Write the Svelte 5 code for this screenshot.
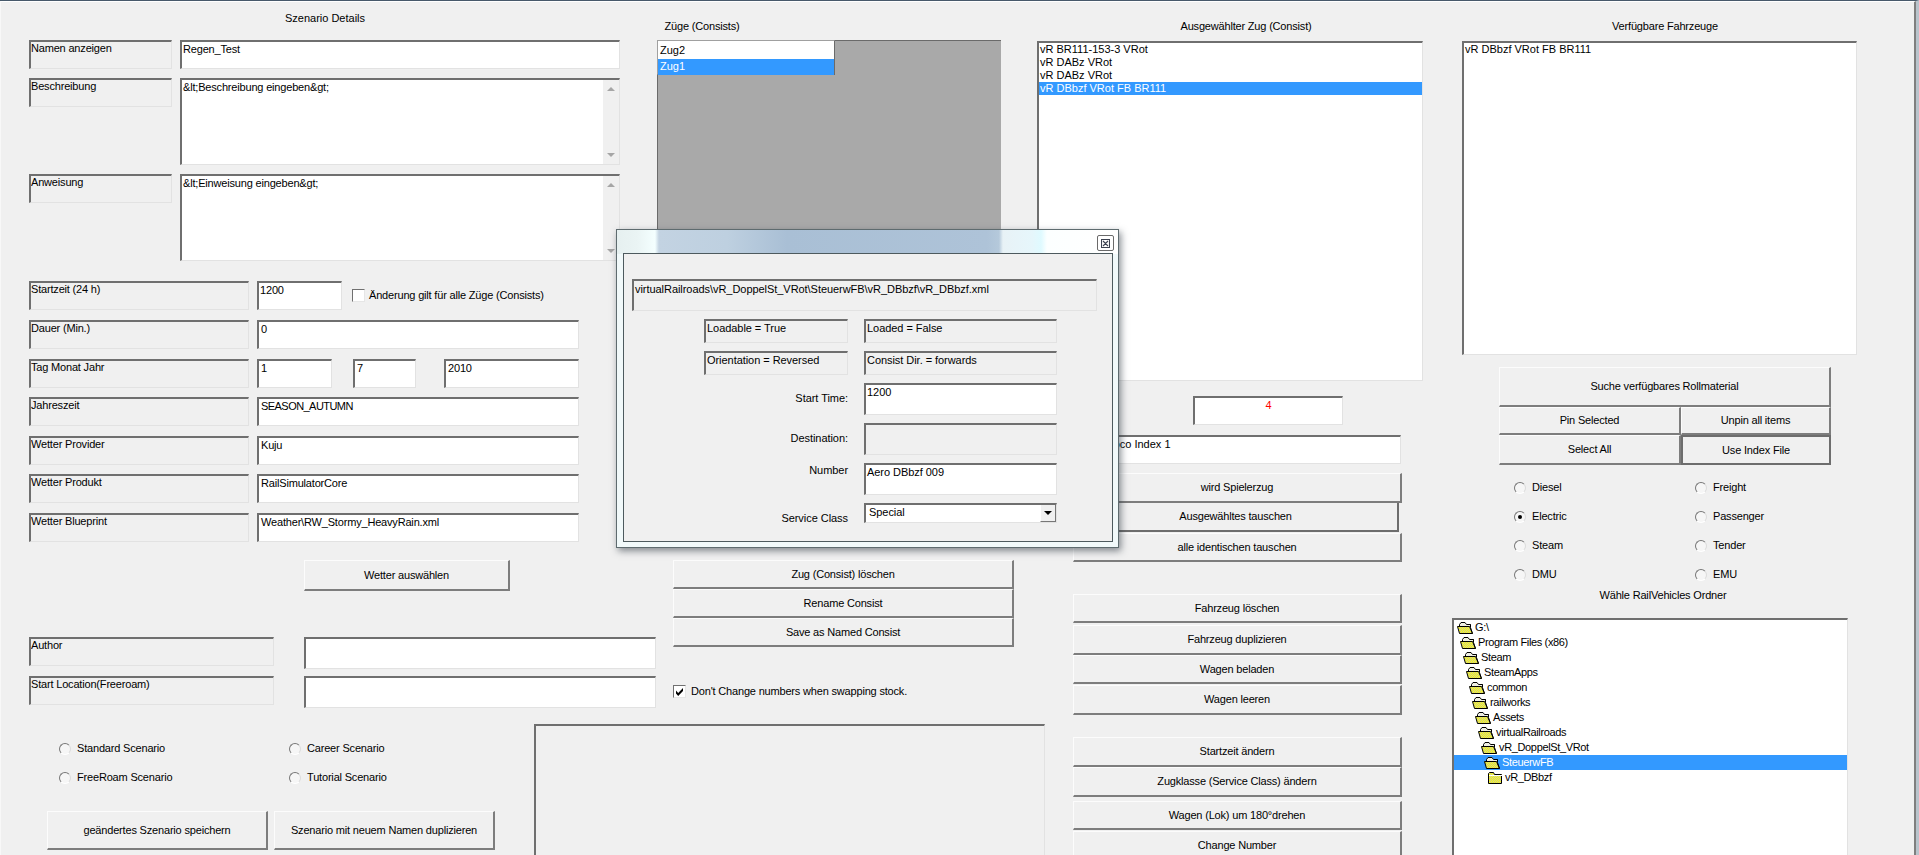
<script>
  const rows = [
    { label: 'Jahreszeit', value: 'SEASON_AUTUMN', cls: 'm9', tight: true },
    { label: 'Wetter Provider', value: 'Kuju', cls: 'm10', tight: false },
    { label: 'Wetter Produkt', value: 'RailSimulatorCore', cls: 'm9', tight: false },
    { label: 'Wetter Blueprint', value: 'Weather\\RW_Stormy_HeavyRain.xml', cls: 'm10', tight: false }
  ];
  const consist = ['vR BR111-153-3 VRot', 'vR DABz VRot', 'vR DABz VRot', 'vR DBbzf VRot FB BR111'];
  const tree = ['G:\\', 'Program Files (x86)', 'Steam', 'SteamApps', 'common', 'railworks', 'Assets', 'virtualRailroads', 'vR_DoppelSt_VRot', 'SteuerwFB', 'vR_DBbzf'];
  const stock = [['Diesel', 'Freight'], ['Electric', 'Passenger'], ['Steam', 'Tender'], ['DMU', 'EMU']];
</script>

<svg class="defs" aria-hidden="true">
  <defs>
    <pattern id="dither" width="2" height="2" patternUnits="userSpaceOnUse">
      <rect width="2" height="2" fill="#ffff00" />
      <rect width="1" height="1" fill="#c8c8a8" />
      <rect x="1" y="1" width="1" height="1" fill="#c8c8a8" />
    </pattern>
  </defs>
</svg>

<div class="chrome">
  <div class="form">
    <div class="leftwrap">
      <div class="toprow">
        <section class="colA">
          <div class="title scen">Szenario Details</div>
          <div class="row r1 first">
            <div class="sunken lab">Namen anzeigen</div>
            <div class="sunken white val">Regen_Test</div>
          </div>
          <div class="row r1 tall m9">
            <div class="sunken lab">Beschreibung</div>
            <div class="sunken white val area">
              &amp;lt;Beschreibung eingeben&amp;gt;
              <div class="scroll"><i class="up"></i><i class="down"></i></div>
            </div>
          </div>
          <div class="row r1 tall m9">
            <div class="sunken lab">Anweisung</div>
            <div class="sunken white val area">
              &amp;lt;Einweisung eingeben&amp;gt;
              <div class="scroll"><i class="up"></i><i class="down"></i></div>
            </div>
          </div>
          <div class="row r2 m20">
            <div class="sunken lab">Startzeit (24 h)</div>
            <div class="sunken white time">1200</div>
            <div class="check allc"><span class="box"></span>Änderung gilt für alle Züge (Consists)</div>
          </div>
          <div class="row r2 m10">
            <div class="sunken lab">Dauer (Min.)</div>
            <div class="sunken white val">0</div>
          </div>
          <div class="row r2 m10">
            <div class="sunken lab">Tag Monat Jahr</div>
            <div class="sunken white d1">1</div>
            <div class="sunken white d2">7</div>
            <div class="sunken white d3">2010</div>
          </div>
          {#each rows as r}
            <div class="row r2 {r.cls}">
              <div class="sunken lab">{r.label}</div>
              <div class="sunken white val" class:tight={r.tight}>{r.value}</div>
            </div>
          {/each}
          <button class="btn weather">Wetter auswählen</button>
          <div class="row r3 author">
            <div class="sunken lab">Author</div>
            <div class="sunken white val"></div>
          </div>
          <div class="row r3 start">
            <div class="sunken lab">Start Location(Freeroam)</div>
            <div class="sunken white val"></div>
          </div>
        </section>

        <section class="colB">
          <div class="title zuege">Züge (Consists)</div>
          <div class="graypanel">
            <div class="zuglist">
              <div class="zitem">Zug2</div>
              <div class="zitem sel">Zug1</div>
            </div>
          </div>
          <div class="bstack">
            <button class="btn b29">Zug (Consist) löschen</button>
            <button class="btn b29">Rename Consist</button>
            <button class="btn b29">Save as Named Consist</button>
          </div>
          <div class="check dont">
            <span class="box"><svg viewBox="0 0 11 11" width="11" height="11"><path d="M2 4.6l2.2 2.4L9 2v3L4.2 10 2 7.6z" fill="#000" /></svg></span>Don't Change numbers when swapping stock.
          </div>
        </section>
      </div>

      <div class="bottomrow">
        <div class="scenblock">
          <div class="scengrid">
            <div class="radio"><span class="dot"></span>Standard Scenario</div>
            <div class="radio"><span class="dot"></span>Career Scenario</div>
            <div class="radio"><span class="dot"></span>FreeRoam Scenario</div>
            <div class="radio"><span class="dot"></span>Tutorial Scenario</div>
          </div>
          <div class="savebtns">
            <button class="btn">geändertes Szenario speichern</button>
            <button class="btn">Szenario mit neuem Namen duplizieren</button>
          </div>
        </div>
        <div class="sunken emptypanel"></div>
      </div>
    </div>

    <section class="colC">
      <div class="title sel-title">Ausgewählter Zug (Consist)</div>
      <div class="sunken white list clist">
        {#each consist as c, i}
          <div class="litem" class:sel={i === 3}>{c}</div>
        {/each}
      </div>
      <div class="sunken white idx">4</div>
      <div class="sunken white loco">Lead Loco Index 1</div>
      <div class="bstack cbtns first3">
        <button class="btn b30">wird Spielerzug</button>
        <button class="btn b29 focus">Ausgewähltes tauschen</button>
        <button class="btn b29 low">alle identischen tauschen</button>
      </div>
      <div class="bstack cbtns second">
        <button class="btn b29">Fahrzeug löschen</button>
        <button class="btn b30 low2">Fahrzeug duplizieren</button>
        <button class="btn b29">Wagen beladen</button>
        <button class="btn b30 low">Wagen leeren</button>
      </div>
      <div class="bstack cbtns third">
        <button class="btn b30">Startzeit ändern</button>
        <button class="btn b30">Zugklasse (Service Class) ändern</button>
        <button class="btn b29 low3">Wagen (Lok) um 180°drehen</button>
        <button class="btn b30 low">Change Number</button>
      </div>
    </section>

    <section class="colD">
      <div class="title avail">Verfügbare Fahrzeuge</div>
      <div class="sunken white list dlist"><div class="litem">vR DBbzf VRot FB BR111</div></div>
      <div class="stockbtns">
        <button class="btn search">Suche verfügbares Rollmaterial</button>
        <button class="btn">Pin Selected</button>
        <button class="btn">Unpin all items</button>
        <button class="btn">Select All</button>
        <button class="btn usefile">Use Index File</button>
      </div>
      <div class="stockgrid">
        {#each stock as pair, i}
          {#each pair as s, j}
            <div class="radio"><span class="dot" class:on={i === 1 && j === 0}></span>{s}</div>
          {/each}
        {/each}
      </div>
      <div class="title folders">Wähle RailVehicles Ordner</div>
      <div class="sunken white tree">
        {#each tree as t, i}
          <div class="trow" class:sel={i === 9} style="padding-left:{3 + i * 3}px">
            {#if i < 10}
              <svg class="folder" viewBox="0 0 16 14" width="16" height="14">
                <path d="M2.5 11V3.5L4 1.5h4l1.5 2h4v2.5" fill="#efefe4" stroke="#000" />
                <path d="M.5 5.5h12l3 7H2.5z" fill="url(#dither)" stroke="#000" />
                <path d="M13.5 3.5v3l2 6" fill="none" stroke="#000" />
              </svg>
            {:else}
              <svg class="folder" viewBox="0 0 16 14" width="16" height="14">
                <path d="M1.5 12.5V2.5l1-1h4l1 2h7v9z" fill="url(#dither)" stroke="#000" />
                <path d="M2 4.5h13" stroke="#fff" />
              </svg>
            {/if}
            <span>{t}</span>
          </div>
        {/each}
      </div>
    </section>

    <div class="modal" role="dialog" aria-label="Vehicle details">
      <div class="mtitle">
        <div class="close">
          <svg viewBox="0 0 9 9" width="9" height="9">
            <path d="M.5 .5h8v8h-8z M2 2l5 5 M7 2l-5 5" fill="none" stroke="#3c4250" stroke-width="1.1" />
          </svg>
        </div>
      </div>
      <div class="client">
        <div class="sunken path">virtualRailroads\vR_DoppelSt_VRot\SteuerwFB\vR_DBbzf\vR_DBbzf.xml</div>
        <div class="mgrid">
          <div class="sunken s24">Loadable = True</div>
          <div class="sunken s24">Loaded = False</div>
          <div class="sunken s24">Orientation = Reversed</div>
          <div class="sunken s24">Consist Dir. = forwards</div>
          <div class="rl startl">Start Time:</div>
          <div class="sunken white s32">1200</div>
          <div class="rl destl">Destination:</div>
          <div class="sunken s32"></div>
          <div class="rl numl">Number</div>
          <div class="sunken white s32">Aero DBbzf 009</div>
          <div class="rl svcl">Service Class</div>
          <div class="sunken white combo">Special<span class="carrow"><i></i></span></div>
        </div>
      </div>
    </div>
  </div>
</div>

<style>
  :global(body) { margin: 0; background: #f0f0f0; overflow: hidden; }
  .defs { position: absolute; width: 0; height: 0; }
  .chrome {
    height: 855px; box-sizing: border-box; overflow: hidden;
    border-top: 1px solid #47596b; border-right: 3px solid #b9c4cc;
  }
  .form {
    position: relative; display: flex; height: 854px; box-sizing: border-box; overflow: hidden;
    border-top: 1px solid #fff; border-left: 1px solid #f8f8f8; border-right: 2px solid #7f7f7f;
    background: #f0f0f0; color: #000;
    font: 11px/13px "Liberation Sans", Arial, sans-serif; letter-spacing: -0.18px;
  }
  .leftwrap { flex: none; width: 1008px; margin-left: 28px; }
  .toprow { display: flex; height: 705px; }
  .colA { flex: none; width: 627px; }
  .colB { flex: none; width: 381px; }
  .colC { flex: none; width: 415px; }
  .colD { flex: none; width: 460px; }

  .title { text-align: center; height: 13px; }
  .scen { width: 592px; margin-top: 10px; letter-spacing: 0; }
  .zuege { width: 92px; margin-top: 18px; }
  .sel-title { padding-left: 32px; width: 386px; box-sizing: border-box; margin-top: 18px; }
  .avail { width: 426px; margin-top: 18px; }
  .folders { width: 422px; margin-top: 0; }

  .sunken {
    box-sizing: border-box; padding: 1px 0 0 1px; overflow: hidden; white-space: nowrap;
    border-style: solid; border-width: 2px 1px 1px 2px;
    border-color: #6f6f6f #e2e2e2 #e2e2e2 #6f6f6f; background: #f0f0f0;
  }
  .white { background: #fff; }
  .val { padding-left: 2px; }
  .tight { letter-spacing: -0.55px; }

  .row { display: flex; height: 29px; }
  .row .lab { height: 29px; padding: 0; }
  .first { margin-top: 15px; }
  .m9 { margin-top: 9px; }
  .m10 { margin-top: 10px; }
  .m20 { margin-top: 20px; }
  .r1 .lab { flex: none; width: 143px; margin-right: 8px; }
  .r1 .val { flex: none; width: 440px; padding-left: 1px; }
  .r2 .lab { flex: none; width: 220px; margin-right: 8px; }
  .r2 .val { flex: none; width: 322px; }
  .r3 { height: 32px; }
  .r3 .lab { flex: none; width: 245px; margin-right: 30px; }
  .r3 .val { flex: none; width: 352px; }
  .tall { height: 87px; }
  .area { position: relative; height: 87px; }
  .scroll { position: absolute; top: 0; right: 0; bottom: 0; width: 16px; background: #f0f0f0; }
  .up, .down {
    position: absolute; left: 4px; width: 0; height: 0;
    border-left: 4px solid transparent; border-right: 4px solid transparent;
  }
  .up { top: 7px; border-bottom: 4px solid #a6a6a6; }
  .down { bottom: 7px; border-top: 4px solid #a6a6a6; }
  .time { flex: none; width: 85px; }
  .d1 { flex: none; width: 75px; margin-right: 21px; padding-left: 2px; }
  .d2 { flex: none; width: 63px; margin-right: 28px; padding-left: 2px; }
  .d3 { flex: none; width: 135px; padding-left: 2px; }

  .check { display: flex; align-items: center; }
  .box {
    flex: none; display: block; box-sizing: border-box; width: 13px; height: 13px; margin-right: 4px;
    background: #fff; border-style: solid; border-width: 1px; border-color: #707070 #e6e6e6 #e6e6e6 #707070;
  }
  .box svg { display: block; }
  .allc { margin: 8px 0 0 10px; height: 13px; }
  .dont { margin: 38px 0 0 17px; }
  .dont .box { margin-right: 5px; }

  .btn {
    display: block; box-sizing: border-box; width: 100%; height: 39px; margin: 0; padding: 0;
    font: inherit; letter-spacing: inherit; color: #000; text-align: center; background: #f0f0f0; appearance: none;
    border-style: solid; border-width: 1px 2px 2px 1px;
    border-color: #fcfcfc #7d7d7d #7d7d7d #fcfcfc;
  }
  .weather { width: 206px; height: 31px; margin: 18px 0 0 275px; }
  .author { margin-top: 46px; }
  .start { margin-top: 7px; }

  .graypanel {
    box-sizing: border-box; width: 344px; height: 505px; margin: 7px 0 0 1px;
    background: #a9a9a9; border-top: 1px solid #6a6a6a; border-left: 1px solid #6a6a6a;
  }
  .zuglist {
    box-sizing: border-box; width: 178px; height: 35px; margin: -1px 0 0 -1px; padding-top: 2px;
    background: #fff; border-style: solid; border-width: 1px; border-color: #6a6a6a;
    border-top-color: #a0a0a0; border-left-color: #a0a0a0;
  }
  .zitem { height: 16px; line-height: 15px; padding-left: 2px; letter-spacing: 0; }
  .zitem.sel, .litem.sel { background: #3399ff; color: #fff; }

  .bstack { margin: 15px 0 0 17px; width: 341px; }
  .b29 { height: 29px; }
  .b30 { height: 30px; }

  .bottomrow { display: flex; margin-top: 17px; }
  .scenblock { flex: none; width: 487px; margin-left: 18px; }
  .scengrid { display: grid; grid-template-columns: 230px 1fr; grid-auto-rows: 29px; margin: 10px 0 0 12px; }
  .radio { display: flex; align-items: center; }
  .dot {
    flex: none; display: flex; align-items: center; justify-content: center;
    box-sizing: border-box; width: 12px; height: 12px; margin-right: 6px; border-radius: 50%;
    background: #f6f6f6; border: 1px solid; border-color: #777 #dcdcdc #fff #777;
  }
  .dot.on::after { content: ""; width: 4px; height: 4px; border-radius: 50%; background: #000; }
  .savebtns { display: flex; gap: 6px; margin-top: 19px; }
  .savebtns .btn { width: 221px; }
  .emptypanel { flex: none; width: 511px; height: 200px; }

  .list { padding: 0; letter-spacing: 0; }
  .litem { height: 13px; padding-left: 1px; }
  .clist { width: 386px; height: 340px; margin-top: 8px; }
  .idx { width: 150px; height: 29px; margin: 15px 0 0 156px; text-align: center; color: #f00; padding: 1px 0 0; }
  .loco { width: 328px; height: 29px; margin: 10px 0 0 36px; padding-left: 5px; letter-spacing: 0; }
  .cbtns { width: 329px; margin-left: 36px; }
  .first3 { margin-top: 9px; }
  .second { margin-top: 32px; }
  .third { margin-top: 22px; }
  .focus { width: 326px; border-color: #6d6d6d; border-left-color: #fcfcfc; border-top-width: 0; }
  .low { margin-top: 1px; }
  .low2 { margin-top: 2px; }
  .low3 { margin-top: 4px; }

  .dlist { width: 395px; height: 314px; margin: 8px 0 0 10px; padding: 0; }
  .stockbtns {
    display: grid; grid-template-columns: 182px 150px; grid-template-rows: 40px 28px 30px;
    width: 332px; margin: 12px 0 0 47px;
  }
  .stockbtns .btn { height: auto; }
  .search { grid-column: 1 / 3; }
  .usefile { border: 2px solid #6d6d6d; }
  .stockgrid {
    display: grid; grid-template-columns: 181px 1fr; grid-auto-rows: 29px;
    width: 300px; margin: 8px 0 0 62px;
  }
  .tree { width: 396px; height: 300px; margin-top: 16px; padding: 0; letter-spacing: -0.35px; }
  .trow { display: flex; align-items: center; height: 15px; }
  .trow.sel { background: #3399ff; color: #fff; }
  .folder { flex: none; margin-right: 2px; }

  .modal {
    position: absolute; left: 615px; top: 227px; width: 503px; height: 319px; box-sizing: border-box;
    border: 1px solid #5e6b6f; box-shadow: 2px 3px 7px rgba(40, 50, 60, 0.55);
    padding: 0 5px 5px 6px; display: flex; flex-direction: column; letter-spacing: -0.05px;
    background-color: #f1f9fa;
    background-image: linear-gradient(90deg, #e6f0f0 0, #eaf4f4 20px, #f4ffff 38px, #c3d3e2 42px, #bed0e0 110px, #a9bfd5 170px, #aec3d8 370px, #b5c9db 382px, #e8f2f6 386px, #e6f6fb 415px, #dffaff 424px, #fcffff 430px, #fff 100%);
    background-size: 100% 24px;
    background-repeat: no-repeat;
  }
  .mtitle { flex: none; height: 23px; position: relative; }
  .close {
    position: absolute; right: -1px; top: 5px; width: 17px; height: 16px; box-sizing: border-box;
    border: 1px solid #6a6a6a; border-radius: 2px; background: #fff;
    display: flex; align-items: center; justify-content: center;
  }
  .close svg { display: block; }
  .client {
    flex: 1; box-sizing: border-box; background: #f0f0f0; border: 1px solid #4d5a5e;
    padding: 25px 16px 0 8px;
  }
  .path { width: 465px; height: 32px; padding: 2px 0 0 1px; }
  .mgrid {
    display: grid; grid-template-columns: 144px 193px; column-gap: 16px; row-gap: 8px;
    grid-template-rows: 24px 24px 32px 32px 32px 20px;
    margin: 8px 0 0 72px;
  }
  .s24 { height: 24px; }
  .s32 { height: 32px; }
  .rl { text-align: right; }
  .startl { margin-top: 9px; }
  .destl { margin-top: 9px; }
  .numl { margin-top: 1px; padding-right: 0; }
  .svcl { margin-top: 9px; }
  .combo { position: relative; height: 20px; padding: 1px 0 0 3px; }
  .carrow {
    position: absolute; right: 0; top: 0; bottom: 0; width: 16px; box-sizing: border-box;
    background: #f0f0f0; border-left: 1px solid #fff; border-right: 1px solid #777; border-bottom: 1px solid #777;
    display: flex; align-items: center; justify-content: center;
  }
  .carrow i {
    width: 0; height: 0; border-left: 4px solid transparent; border-right: 4px solid transparent; border-top: 4px solid #000;
  }
</style>
